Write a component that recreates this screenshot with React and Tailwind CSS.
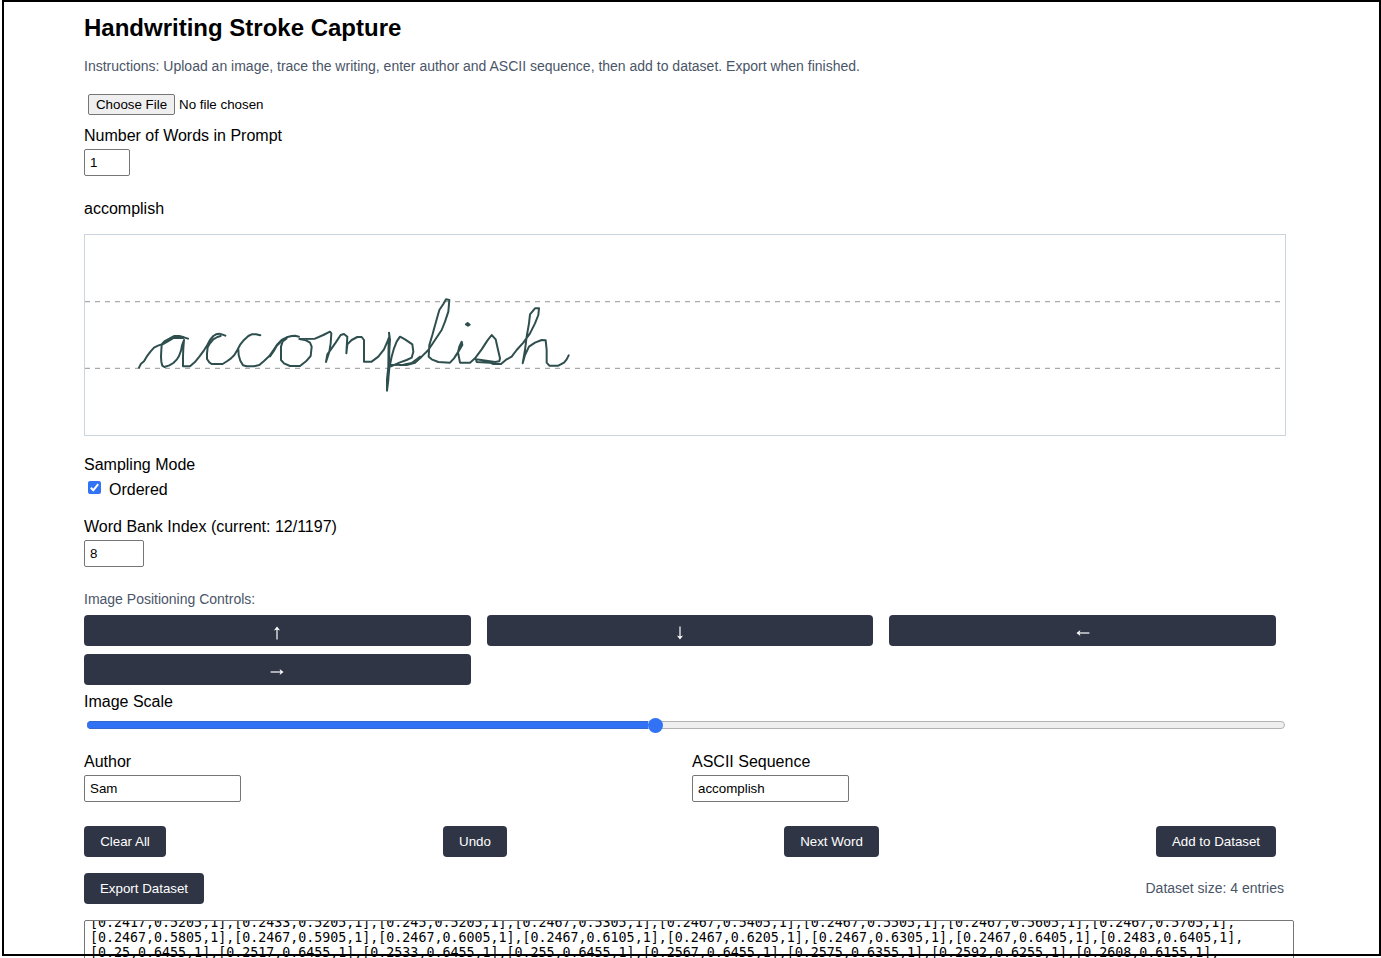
import React from "react";

const BTN = "flex h-[31px] items-center justify-center rounded bg-[#2f3545] text-[13.333px] text-white";
const FIELD = "flex h-[27px] items-center rounded-[2px] border border-[#767676] bg-white pl-[5px] text-[13.333px] text-black";

const STROKES = {
  acc: "M27 233L33 221L42 214L50 200L62 184L72 173L84 167L95 163L103 154L118 146L132 138L148 138L162 142L174 146M160 144L132 143L116 153L95 165L94 180L93 200L94 215L97 227L103 231L118 226L130 219L140 209L147 198L153 182L156 166L162 150L160 175L159 200L159 229L180 229L194 217L208 200L222 181L232 165L240 150L250 138L258 133L268 131L278 134L286 137M272 138L262 141L250 148L240 160L233 172L231 190L231 207L238 217L245 222L278 222L292 213L303 205L313 195L322 180L330 165L342 150L355 138L365 133L378 133L391 136M325 178L326 195L331 212L339 226L350 229L372 229L388 225L402 213L418 198L430 181L440 167L450 158",
  omp: "M0 199L12 182L22 163L35 150L50 142L65 138L75 137L87 140M50 145L38 154L33 170L33 210L42 220L60 228L90 228L108 214L122 198L125 170L120 158L108 151L88 147L135 146L160 135L180 125L184 130L182 160L178 185L168 216L172 193L185 175L197 158L212 135L222 132L232 140L229 190L232 163L245 150L262 141L275 141L282 150L282 215L305 215L325 200L342 178L352 155L358 140L357 128L360 150L358 180L357 230L355 270L351 302L354 275L358 235L365 200L372 175L380 155L390 140L405 148L427 163L430 185L425 203L410 210L390 217L363 229M363 225L400 224L425 219L440 208L450 200M356 145L355 230L351 268L351 300",
  lish: "M0 225L20 225L45 218L65 200L85 180L105 150L125 120L135 95L145 65L148 30L138 28L130 42L118 60L108 95L97 135L88 165L86 200L95 208L115 216L150 218L162 205L175 185L187 165L185 155L178 170L174 187L180 218L210 218L225 205L245 178L262 152L275 135L287 148L293 175L300 205L298 214L285 216L228 208L230 216L270 218L280 222L303 222L320 208L335 200L350 180L370 158L390 130L405 100L415 75L417 55L405 55L390 73L387 100L380 140L375 180L368 220L375 195L387 170L405 158L425 150L437 151L440 180L440 218L448 227L475 227L492 218L500 208L506 196M198 103L203 99L209 104L204 107Z",
};

const POINTS = [
  "[0.2417,0.5205,1],[0.2433,0.5205,1],[0.245,0.5205,1],[0.2467,0.5305,1],[0.2467,0.5405,1],[0.2467,0.5505,1],[0.2467,0.5605,1],[0.2467,0.5705,1],",
  "[0.2467,0.5805,1],[0.2467,0.5905,1],[0.2467,0.6005,1],[0.2467,0.6105,1],[0.2467,0.6205,1],[0.2467,0.6305,1],[0.2467,0.6405,1],[0.2483,0.6405,1],",
  "[0.25,0.6455,1],[0.2517,0.6455,1],[0.2533,0.6455,1],[0.255,0.6455,1],[0.2567,0.6455,1],[0.2575,0.6355,1],[0.2592,0.6255,1],[0.2608,0.6155,1],",
];

function Handwriting() {
  return (
    <svg className="block h-[200px] w-[1200px]" viewBox="85 235 1200 200" fill="none">
      <path d="M85 301.67H1285M85 368.33H1285" stroke="#aaa" strokeWidth="1.4" strokeDasharray="5 5" />
      <g stroke="#2f4f4f" strokeWidth="6" strokeLinejoin="round" strokeLinecap="round">
        <path transform="translate(130 290) scale(.33333)" d={STROKES.acc} />
        <path transform="translate(270 290) scale(.33333)" d={STROKES.omp} />
        <path transform="translate(400 290) scale(.33333)" d={STROKES.lish} />
      </g>
    </svg>
  );
}

function Arrow({ className }) {
  return (
    <svg className={"h-[14px] w-[14px] " + className} viewBox="0 0 14 14" fill="none" stroke="#fff">
      <path d="M.6 7H12" strokeWidth="1.2" />
      <path d="M9.6 3.9L13.5 7L9.6 10.1L10.6 7Z" fill="#fff" stroke="none" />
    </svg>
  );
}

export default function App() {
  return (
    <div className="h-[958px] overflow-hidden bg-white font-['Liberation_Sans',Arial,sans-serif] text-base leading-[18px] text-black">
      <div className="relative ml-[2px] h-[958px] w-[1379px] overflow-hidden pl-[82px]">
        <div className="pointer-events-none absolute left-0 top-0 z-10 h-[956px] w-[1379px] border-2 border-black" />
        <h1 className="h-[58px] pt-[14px] text-[24px] font-bold leading-[28px]">Handwriting Stroke Capture</h1>
        <p className="h-[36px] text-[14px] leading-[17px] text-[#4a5568]">
          Instructions: Upload an image, trace the writing, enter author and ASCII sequence, then add to dataset. Export when finished.
        </p>
        <div className="flex h-[33px] items-start pl-1 text-[13.333px]">
          <button className="h-[21px] w-[87px] rounded-[2px] border border-[#767676] bg-[#efefef] leading-[19px]">Choose File</button>
          <span className="ml-1 leading-[21px]">No file chosen</span>
        </div>
        <label className="block h-[22px]">Number of Words in Prompt</label>
        <div className={FIELD + " w-[46px]"}>1</div>
        <p className="h-[58px] pt-6">accomplish</p>
        <div className="h-[202px] w-[1202px] border border-[#cbd5e0]"><Handwriting /></div>
        <label className="block h-[45px] pt-5">Sampling Mode</label>
        <label className="flex h-[37px] items-start">
          <svg className="ml-1 h-[13px] w-[13px]" viewBox="0 0 13 13">
            <rect width="13" height="13" rx="2" fill="#3273f6" />
            <path d="M2.8 6.8L5.3 9.3L10.2 3.2" fill="none" stroke="#fff" strokeWidth="2" />
          </svg>
          <span className="ml-2">Ordered</span>
        </label>
        <label className="block h-[22px]">Word Bank Index (current: 12/1197)</label>
        <div className={FIELD + " w-[60px]"}>8</div>
        <p className="h-[48px] pt-6 text-[14px] leading-[17px] text-[#4a5568]">Image Positioning Controls:</p>
        <div className="grid w-[1192px] grid-cols-3 gap-x-4 gap-y-2">
          <button className={BTN}><Arrow className="mt-[5px] -rotate-90" /></button>
          <button className={BTN}><Arrow className="mt-[5px] rotate-90" /></button>
          <button className={BTN}><Arrow className="mt-[5px] rotate-180" /></button>
          <button className={BTN}><Arrow className="mt-[5px]" /></button>
        </div>
        <label className="block h-[32px] pt-2">Image Scale</label>
        <div className="flex h-[36px] w-[1204px] items-start pl-[3px]">
          <div className="mt-1 flex h-2 w-[1198px] items-center rounded-full border border-[#b2b2b2] bg-[#efefef]">
            <div className="-ml-px h-2 w-[561px] shrink-0 rounded-l-full border-y border-[#3569cf] bg-[#3273f6]" />
            <div className="-ml-[0.5px] h-[15px] w-[15px] shrink-0 rounded-full bg-[#3273f6]" />
          </div>
        </div>
        <div className="flex h-[73px]">
          <div className="w-[608px]">
            <label className="block h-[22px]">Author</label>
            <div className={FIELD + " w-[157px]"}>Sam</div>
          </div>
          <div>
            <label className="block h-[22px]">ASCII Sequence</label>
            <div className={FIELD + " w-[157px]"}>accomplish</div>
          </div>
        </div>
        <div className="flex h-[47px] w-[1192px] items-start justify-between">
          <button className={BTN + " w-[82px]"}>Clear All</button>
          <button className={BTN + " w-[64px]"}>Undo</button>
          <button className={BTN + " w-[95px]"}>Next Word</button>
          <button className={BTN + " w-[120px]"}>Add to Dataset</button>
        </div>
        <div className="flex h-[47px] w-[1200px] items-start justify-between">
          <button className={BTN + " w-[120px]"}>Export Dataset</button>
          <span className="text-[14px] leading-[31px] text-[#4a5568]">Dataset size: 4 entries</span>
        </div>
        <div className="flex h-[60px] w-[1210px] flex-col overflow-hidden rounded-[2px] border border-[#767676] pl-[5px] font-['DejaVu_Sans_Mono',monospace] text-[13.333px] leading-[15px] tracking-[-0.015px]">
          <div className="-mt-[6px] whitespace-pre">
            {POINTS.map((line) => <div key={line}>{line}</div>)}
          </div>
        </div>
      </div>
    </div>
  );
}
